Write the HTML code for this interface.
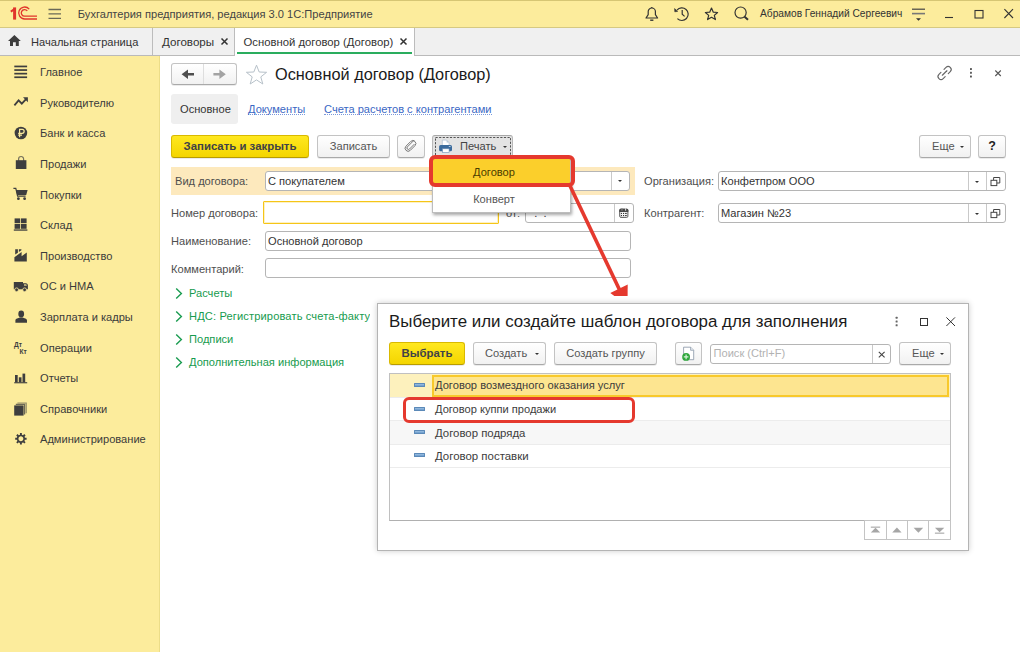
<!DOCTYPE html>
<html lang="ru">
<head>
<meta charset="utf-8">
<title>1C</title>
<style>
*{box-sizing:border-box;margin:0;padding:0}
html,body{width:1024px;height:659px;overflow:hidden;background:#fff}
body{font-family:"Liberation Sans",sans-serif;font-size:11.1px;color:#3b3b3b;position:relative}
.abs{position:absolute}
.t{position:absolute;white-space:nowrap;line-height:14px;color:#4e4e4e}
#hdr{left:0;top:0;width:1020px;height:28px;background:#fcec9c;border-top:1px solid #d6c674;border-bottom:1px solid #d6c982}
#tabs{left:0;top:28px;width:1020px;height:28px;background:#f0f0f0;border-bottom:1px solid #bababa}
#side{left:0;top:56px;width:160px;height:596px;background:#fcec9c;border-right:1px solid #ecdd88}
.si{position:absolute;left:40px;white-space:nowrap;line-height:14px;color:#3b3b3b}
.btn{position:absolute;height:23px;border:1px solid #c3c3c3;border-bottom-color:#a9a9a9;border-radius:3px;background:linear-gradient(#ffffff,#f1f1f1);box-shadow:0 1px 0 rgba(0,0,0,.08);text-align:center;line-height:21px;white-space:nowrap;color:#555}
.ybtn{background:linear-gradient(#ffe81f,#f4d500);border-color:#d9b900;border-bottom-color:#b89c00;font-weight:bold;color:#404247;font-size:11.4px}
.inp{position:absolute;height:20px;border:1px solid #b5b5b5;border-radius:3px;background:#fff;line-height:18px;padding-left:2px;white-space:nowrap;color:#333}
.lnk{color:#3a67c4;border-bottom:1px dotted #7a99dc}
.car{position:absolute;width:0;height:0;border-left:2.3px solid transparent;border-right:2.3px solid transparent;border-top:2.4px solid #333}
.grp{position:absolute;left:189px;color:#169b4e;white-space:nowrap;line-height:14px}
</style>
</head>
<body>
<!-- header -->
<div id="hdr" class="abs"></div>
<div class="t" style="left:77.8px;top:7px;font-size:11.1px;color:#444">Бухгалтерия предприятия, редакция 3.0 1С:Предприятие</div>
<div class="t" style="left:760px;top:7px;font-size:10.2px;color:#333">Абрамов Геннадий Сергеевич</div>
<!-- tabs -->
<div id="tabs" class="abs"></div>
<div class="abs" style="left:152px;top:28px;width:1px;height:27px;background:#bcbcbc"></div>
<div class="abs" style="left:234px;top:28px;width:1px;height:27px;background:#bcbcbc"></div>
<div class="abs" style="left:235px;top:28px;width:179px;height:28px;background:#fff"></div>
<div class="abs" style="left:414px;top:28px;width:1px;height:27px;background:#bcbcbc"></div>
<div class="abs" style="left:237px;top:52px;width:175px;height:2px;background:linear-gradient(#2aad5e,#2aad5e 75%,#9fd9b7)"></div>
<div class="t" style="left:31px;top:35px;color:#333">Начальная страница</div>
<div class="t" style="left:162px;top:35px;color:#333;font-size:11.6px">Договоры</div>
<div class="t" style="left:243.5px;top:35px;color:#333;font-size:11.3px">Основной договор (Договор)</div>
<!-- sidebar -->
<div id="side" class="abs"></div>
<div class="si" style="top:65px">Главное</div>
<div class="si" style="top:96px">Руководителю</div>
<div class="si" style="top:126px">Банк и касса</div>
<div class="si" style="top:157px">Продажи</div>
<div class="si" style="top:188px">Покупки</div>
<div class="si" style="top:218px">Склад</div>
<div class="si" style="top:249px">Производство</div>
<div class="si" style="top:279px">ОС и НМА</div>
<div class="si" style="top:310px">Зарплата и кадры</div>
<div class="si" style="top:341px">Операции</div>
<div class="si" style="top:371px">Отчеты</div>
<div class="si" style="top:402px">Справочники</div>
<div class="si" style="top:432px">Администрирование</div>
<!-- header icons -->
<svg class="abs" style="left:0;top:0" width="1024" height="56" viewBox="0 0 1024 56">
<!-- 1C logo -->
<g fill="none" stroke="#e0342b" stroke-width="1.3">
<path d="M10.8 11.6 L14.5 9.2" stroke-width="2"/>
<path d="M14.6 7.4 V19.6" stroke-width="3"/>
<path d="M29.2 9.1 A6 6 0 1 0 24.6 19 H37"/>
<path d="M27.3 11 A3.3 3.3 0 1 0 24.6 16.2 H37"/>
</g>
<!-- hamburger -->
<g stroke="#6a6957" stroke-width="1.3"><path d="M48.5 9.5 H61 M48.5 13.9 H61 M48.5 18.3 H61"/></g>
<!-- home -->
<path d="M14.4 35 L8 41 H10 V46 H13 V42.3 H15.8 V46 H18.8 V41 H20.8 Z" fill="#3d3d3d"/>
<!-- tab close x -->
<g stroke="#333" stroke-width="1.5"><path d="M221.5 38.5 L227.5 44.5 M227.5 38.5 L221.5 44.5"/><path d="M400.5 38.5 L406.5 44.5 M406.5 38.5 L400.5 44.5"/></g>
<!-- bell -->
<g fill="none" stroke="#333" stroke-width="1.2">
<path d="M646 18 H657.6 L655.4 14.6 V11.6 A3.6 3.6 0 0 0 648.2 11.6 V14.6 Z" stroke-linejoin="round"/>
<path d="M651.8 8 V7" />
<path d="M650.2 20.2 H653.4" stroke-width="1.4"/>
<!-- history -->
<path d="M677 10.2 A6.3 6.3 0 1 1 677.4 18.6"/>
<path d="M682.2 10 V14.2 L684.6 16.4"/>
<path d="M674.6 8.6 L677.6 11.4 L674.8 11.8 Z" fill="#333" stroke-width=".6"/>
<!-- star -->
<path d="M711.5 8 L713.3 12.2 L717.6 12.5 L714.3 15.4 L715.4 19.6 L711.5 17.3 L707.6 19.6 L708.7 15.4 L705.4 12.5 L709.7 12.2 Z" stroke-linejoin="round"/>
<!-- search -->
<circle cx="740.6" cy="12.6" r="5.6"/>
<path d="M744.6 16.8 L748 19.8" stroke-width="2"/>
</g>
<!-- settings lines -->
<g stroke="#444" stroke-width="1.2"><path d="M912 9.2 H925"/><path d="M912 13.6 H925" stroke="#777" stroke-width="1.6"/></g>
<path d="M916 18.2 H921 L918.5 20.8 Z" fill="#333"/>
<!-- window btns -->
<g fill="none" stroke="#333" stroke-width="1.1"><path d="M945 17.5 H953"/><rect x="975" y="10.5" width="8" height="7.5"/><path d="M1004.4 9.2 L1013 18 M1013 9.2 L1004.4 18"/></g>
</svg>
<!-- sidebar icons -->
<svg class="abs" style="left:0;top:56px" width="44" height="400" viewBox="0 56 44 400">
<g fill="#3e3e3e">
<!-- main -->
<rect x="14.3" y="65.6" width="12.8" height="1.7"/><rect x="14.3" y="69.2" width="12.8" height="1.7"/><rect x="14.3" y="72.8" width="12.8" height="1.7"/><rect x="14.3" y="76.4" width="12.8" height="1.7"/>
<!-- trend -->
<path d="M14.4 105.3 L18.6 100.4 L21.8 103.7 L26.3 98.9" fill="none" stroke="#3e3e3e" stroke-width="1.8"/>
<path d="M23 97.2 H27.9 V102.2 Z"/>
<!-- coin -->
<circle cx="20.9" cy="133" r="6.3"/>
<path d="M19.6 137.2 V129.4 H22.2 A1.9 1.9 0 0 1 22.2 133.3 H18.2 M18.2 135.2 H22" fill="none" stroke="#fcec9c" stroke-width="1.2"/>
<!-- bag -->
<path d="M15.8 160.2 H26.4 V169 H15.8 Z"/>
<path d="M18.6 161 V159 A2.5 2.5 0 0 1 23.6 159 V161" fill="none" stroke="#3e3e3e" stroke-width="1.2" opacity=".7"/>
<!-- cart -->
<path d="M13.4 188.4 H15.8 L17.6 196.2 H25.6" fill="none" stroke="#3e3e3e" stroke-width="1.2"/>
<path d="M16 190 H27.6 L26.2 195 H17.2 Z"/>
<circle cx="18.4" cy="198.7" r="1.4"/><circle cx="24.6" cy="198.7" r="1.4"/>
<!-- warehouse -->
<rect x="14.6" y="218.4" width="5.6" height="4.8"/><rect x="21" y="218.4" width="5.6" height="4.8"/>
<rect x="14.6" y="224" width="5.6" height="4.8"/><rect x="21" y="224" width="5.6" height="4.8"/>
<rect x="13.8" y="229.4" width="13.6" height="1.3"/>
<!-- factory -->
<path d="M14.4 261.4 V257.2 L21.6 252 V256.2 L26.8 252.6 V261.4 Z"/>
<path d="M15.2 254.6 V249.2 H17.9 V252.7 Z"/><path d="M18.9 252 V249.2 H21.4 V250.2 Z"/>
<!-- truck -->
<path d="M13.8 282 H23 V289.3 H13.8 Z"/>
<path d="M23 283.3 H26.2 Q27.9 283.6 27.9 285.6 V289.3 H23 Z"/>
<path d="M24 284.2 H26 Q26.8 284.4 26.8 285.8 H24 Z" fill="#fcec9c" opacity=".8"/>
<circle cx="16.6" cy="289.8" r="1.9" stroke="#fcec9c" stroke-width=".8"/><circle cx="24.6" cy="289.8" r="1.9" stroke="#fcec9c" stroke-width=".8"/>
<!-- person -->
<ellipse cx="21.2" cy="314" rx="2.9" ry="3.4"/>
<path d="M15.4 322.7 V320.6 C15.4 318.8 18.6 318 19.6 317.6 H22.8 C23.8 318 27 318.8 27 320.6 V322.7 Z"/>
<!-- bars -->
<rect x="14.2" y="382.2" width="13" height="1.1"/>
<rect x="15" y="375" width="2.7" height="7.4"/><rect x="18.8" y="377.3" width="2.7" height="5"/><rect x="22.5" y="373.6" width="2.7" height="8.8"/>
<!-- books -->
<path d="M17.4 402.4 H26.8 V413.2 H25.6 V403.6 H17.4 Z" opacity=".55"/>
<path d="M15.8 403.8 H25.2 V414.4 H24 V405 H15.8 Z" opacity=".75"/>
<rect x="14.2" y="405.4" width="9.4" height="10.2"/>
<!-- gear -->
<g transform="translate(20.9 438.8)">
<circle r="3.3" fill="none" stroke="#3e3e3e" stroke-width="1.7"/>
<g stroke="#3e3e3e" stroke-width="1.9"><path d="M0 -3.6 V-5.7 M0 3.6 V5.7 M-3.6 0 H-5.7 M3.6 0 H5.7 M2.55 2.55 L4.03 4.03 M-2.55 2.55 L-4.03 4.03 M2.55 -2.55 L4.03 -4.03 M-2.55 -2.55 L-4.03 -4.03"/></g>
</g>
</g>
<text x="14" y="346.6" font-family="Liberation Sans" font-size="6.6" font-weight="bold" fill="#3e3e3e">Дт</text>
<text x="19.4" y="353.8" font-family="Liberation Sans" font-size="6.6" font-weight="bold" fill="#3e3e3e">Кт</text>
</svg>
<!-- content -->
<div id="content">
<!-- nav buttons -->
<div class="btn" style="left:171px;top:63px;width:66px;height:22px"></div>
<div class="abs" style="left:203px;top:64px;width:1px;height:20px;background:#dedede"></div>
<svg class="abs" style="left:171px;top:63px" width="66" height="22" viewBox="171 63 66 22"><path d="M181.6 74.3 L188 69.6 V73.1 H194 V75.5 H188 V79 Z" fill="#4f4f4f"/><path d="M225.8 74.3 L219.4 69.6 V73.1 H213.4 V75.5 H219.4 V79 Z" fill="#a3a3a3"/></svg>
<!-- star -->
<svg class="abs" style="left:245px;top:64px" width="23" height="21" viewBox="0 0 23 21"><path d="M11.5 1.2 L14.2 8 L21.6 8.3 L15.8 12.9 L17.8 20 L11.5 15.9 L5.2 20 L7.2 12.9 L1.4 8.3 L8.8 8 Z" fill="#fff" stroke="#b7c1c9" stroke-width="1"/></svg>
<div class="t" style="left:275px;top:64px;font-size:16.3px;line-height:20px;color:#1a1a1a">Основной договор (Договор)</div>
<svg class="abs" style="left:928px;top:60px" width="84" height="28" viewBox="928 60 84 28">
<g transform="rotate(-45 944.6 73)" fill="none" stroke="#666" stroke-width="1.15" stroke-linecap="round">
<path d="M942.4 70 H939.6 A3 3 0 0 0 939.6 76 H942.4"/>
<path d="M946.8 70 H949.6 A3 3 0 0 1 949.6 76 H946.8"/>
<path d="M941.4 73 H947.8"/>
</g>
<g fill="#555"><rect x="970" y="68.1" width="1.9" height="1.9" rx=".5"/><rect x="970" y="71.8" width="1.9" height="1.9" rx=".5"/><rect x="970" y="75.5" width="1.9" height="1.9" rx=".5"/></g>
<path d="M995.3 70.5 L1000.8 76 M1000.8 70.5 L995.3 76" stroke="#555" stroke-width="1.1" fill="none"/>
</svg>
<!-- sub tabs -->
<div class="abs" style="left:171px;top:94px;width:67px;height:30px;background:#efefef;border-radius:3px"></div>
<div class="t" style="left:180px;top:102px;color:#333">Основное</div>
<div class="t lnk" style="left:248px;top:104px;line-height:10.4px">Документы</div>
<div class="t lnk" style="left:324px;top:104px;line-height:10.4px">Счета расчетов с контрагентами</div>
<!-- toolbar -->
<div class="btn ybtn" style="left:171px;top:135px;width:138px">Записать и закрыть</div>
<div class="btn" style="left:317px;top:135px;width:73px">Записать</div>
<div class="btn" style="left:397px;top:135px;width:28px"></div>
<div class="btn" id="printbtn" style="left:432px;top:135px;width:81px;background:#e3e3e3;border-color:#b9b9b9;border-top-color:#a8a8a8"></div>
<svg class="abs" style="left:434px;top:136px" width="79" height="22" viewBox="0 0 79 22"><rect x="1.5" y="1.5" width="75" height="18.4" fill="none" stroke="#444" stroke-width=".9" stroke-dasharray="2.2 1.4"/></svg>
<div class="t" style="left:460px;top:139px;color:#444">Печать</div>
<div class="car" style="left:502.5px;top:145.5px"></div>
<svg class="abs" style="left:396px;top:132px" width="64" height="28" viewBox="396 132 64 28">
<g transform="rotate(-45 410.4 146)" fill="none" stroke="#6a6a6a" stroke-width=".85"><rect x="404.2" y="143" width="12.6" height="6" rx="3"/><path d="M417.4 144.5 H407.6 A1.5 1.5 0 0 0 407.6 147.5 H414.6"/></g>
<path d="M442.3 140.1 H446.6 L449.1 142.6 V146 H442.3 Z" fill="#fff" stroke="#9fb3c8" stroke-width=".6"/>
<path d="M446.6 140.1 V142.6 H449.1 Z" fill="#b8c8d8"/>
<rect x="439.1" y="144.9" width="12.9" height="6.4" rx="1.6" fill="#3b6b9d"/>
<rect x="442.5" y="148.8" width="6.6" height="3.8" fill="#fff" stroke="#6a8db5" stroke-width=".6"/>
<rect x="448.8" y="146.1" width="1.8" height=".9" fill="#c9d8e8"/>
</svg>
<div class="btn" style="left:919px;top:135px;width:52px;text-align:left;padding-left:12px">Еще</div>
<div class="car" style="left:959.7px;top:145.5px"></div>
<div class="btn" style="left:978px;top:135px;width:28px;font-weight:bold;color:#222;font-size:12.5px">?</div>
<!-- row 1 -->
<div class="abs" style="left:171px;top:167px;width:464px;height:28px;background:#fde9bd"></div>
<div class="t" style="left:175px;top:174px">Вид договора:</div>
<div class="inp" style="left:265px;top:171px;width:365px">С покупателем</div>
<div class="abs" style="left:611px;top:172px;width:1px;height:18px;background:#c9c9c9"></div>
<div class="car" style="left:617.8px;top:180.2px"></div>
<div class="t" style="left:644px;top:174px">Организация:</div>
<div class="inp" style="left:718px;top:171px;width:288px">Конфетпром ООО</div>
<div class="abs" style="left:968px;top:172px;width:1px;height:18px;background:#c9c9c9"></div>
<div class="abs" style="left:986px;top:172px;width:1px;height:18px;background:#c9c9c9"></div>
<div class="car" style="left:974.7px;top:180.5px"></div>
<svg class="abs" style="left:989px;top:176px" width="14" height="14" viewBox="0 0 14 14"><g fill="none" stroke="#444" stroke-width="1"><path d="M4.6 4.2 V1.5 H10.8 V7 H8"/><rect x="2" y="4.3" width="5.8" height="5.3" fill="#fff"/></g></svg>
<!-- row 2 -->
<div class="t" style="left:171px;top:206px">Номер договора:</div>
<div class="inp" style="left:263px;top:201px;width:236px;height:23px;border:1px solid #f5c518;box-shadow:inset 0 0 0 1px #fdf1c4;border-radius:1px"></div>
<div class="t" style="left:506px;top:206px">от:</div>
<div class="inp" style="left:525px;top:203px;width:109px">&nbsp;&nbsp;.&nbsp;&nbsp;.</div>
<div class="abs" style="left:614px;top:204px;width:1px;height:18px;background:#c9c9c9"></div>
<div class="t" style="left:644px;top:206px">Контрагент:</div>
<div class="inp" style="left:718px;top:203px;width:288px">Магазин №23</div>
<div class="abs" style="left:968px;top:204px;width:1px;height:18px;background:#c9c9c9"></div>
<div class="abs" style="left:986px;top:204px;width:1px;height:18px;background:#c9c9c9"></div>
<div class="car" style="left:974.7px;top:212.5px"></div>
<svg class="abs" style="left:989px;top:208px" width="14" height="14" viewBox="0 0 14 14"><g fill="none" stroke="#444" stroke-width="1"><path d="M4.6 4.2 V1.5 H10.8 V7 H8"/><rect x="2" y="4.3" width="5.8" height="5.3" fill="#fff"/></g></svg>
<svg class="abs" style="left:616px;top:205px" width="16" height="16" viewBox="616 205 16 16">
<rect x="619.7" y="209.2" width="8.2" height="8.2" rx="1.2" fill="#f4f4f4" stroke="#4a4a4a" stroke-width=".9"/>
<path d="M619.3 212 V210.2 Q619.3 208.8 620.7 208.8 H626.9 Q628.3 208.8 628.3 210.2 V212 Z" fill="#484848"/>
<rect x="621.4" y="208.1" width="1.1" height="2.6" fill="#8a8a8a"/><rect x="625" y="208.1" width="1.1" height="2.6" fill="#d0d0d0"/>
<g fill="#333"><rect x="620.9" y="212.9" width="1.1" height="1.1"/><rect x="623" y="212.9" width="1.1" height="1.1"/><rect x="625.1" y="212.9" width="1.6" height="1.1"/>
<rect x="620.9" y="215" width="1.1" height="1.1"/><rect x="623" y="215" width="1.1" height="1.1"/><rect x="625.1" y="215" width="1.6" height="1.1"/></g>
</svg>
<!-- row 3 -->
<div class="t" style="left:171px;top:234px">Наименование:</div>
<div class="inp" style="left:265px;top:231px;width:366px">Основной договор</div>
<!-- row 4 -->
<div class="t" style="left:171px;top:262px">Комментарий:</div>
<div class="inp" style="left:265px;top:258px;width:366px"></div>
<!-- groups -->
<svg class="abs" style="left:174px;top:287px" width="10" height="13" viewBox="0 0 10 13"><path d="M2.2 1.4 L7.4 6.5 L2.2 11.6" fill="none" stroke="#1a9c50" stroke-width="1.4"/></svg>
<svg class="abs" style="left:174px;top:310px" width="10" height="13" viewBox="0 0 10 13"><path d="M2.2 1.4 L7.4 6.5 L2.2 11.6" fill="none" stroke="#1a9c50" stroke-width="1.4"/></svg>
<svg class="abs" style="left:174px;top:333px" width="10" height="13" viewBox="0 0 10 13"><path d="M2.2 1.4 L7.4 6.5 L2.2 11.6" fill="none" stroke="#1a9c50" stroke-width="1.4"/></svg>
<svg class="abs" style="left:174px;top:356px" width="10" height="13" viewBox="0 0 10 13"><path d="M2.2 1.4 L7.4 6.5 L2.2 11.6" fill="none" stroke="#1a9c50" stroke-width="1.4"/></svg>

<div class="grp" style="top:286px">Расчеты</div>
<div class="grp" style="top:309px;letter-spacing:.14px">НДС: Регистрировать счета-фактуры</div>
<div class="grp" style="top:332px">Подписи</div>
<div class="grp" style="top:355px">Дополнительная информация</div>
</div>
<!-- popup menu -->
<div class="abs" style="left:432px;top:157px;width:139px;height:56px;background:#fff;border:1px solid #bdbdbd;box-shadow:1px 2px 3px rgba(0,0,0,.35)"></div>
<div class="abs" style="left:433px;top:158px;width:137px;height:27px;background:#fbcf2b"></div>
<div class="t" style="left:433px;top:165px;width:122px;text-align:center;color:#4a3c00">Договор</div>
<div class="t" style="left:433px;top:191.5px;width:122px;text-align:center;color:#555">Конверт</div>
<div class="abs" style="left:429px;top:154.5px;width:146px;height:32px;border:4px solid #e5392e;border-radius:6px"></div>
<!-- arrow -->
<svg class="abs" style="left:560px;top:180px" width="80" height="115.6" viewBox="560 180 80 115.6"><path d="M569.6 185 L619.4 289.6" stroke="#e5392e" stroke-width="3.6" fill="none"/><path d="M610.3 292.9 L627.7 284.5 L627.5 306.2 Z" fill="#e5392e"/></svg>
<!-- dialog -->
<div id="dialog">
<div class="abs" style="left:370px;top:296px;width:606px;height:262px;background:#fff"></div>
<div class="abs" style="left:377px;top:303px;width:592px;height:248px;background:#fff;border:1px solid #b4b4b4;box-shadow:0 0 6px rgba(0,0,0,.2)"></div>
<div class="t" style="left:389px;top:312px;font-size:16.9px;line-height:20px;color:#1a1a1a">Выберите или создайте шаблон договора для заполнения</div>
<div class="btn ybtn" style="left:389px;top:342px;width:76px">Выбрать</div>
<div class="btn" style="left:473px;top:342px;width:73px;text-align:left;padding-left:11px">Создать</div>
<div class="car" style="left:534.7px;top:352.5px"></div>
<div class="btn" style="left:554px;top:342px;width:103px">Создать группу</div>
<div class="btn" style="left:675px;top:342px;width:27px"></div>
<div class="inp" style="left:710px;top:344px;width:181px;color:#b2b2b2;padding-left:2.5px;line-height:17px">Поиск (Ctrl+F)</div>
<svg class="abs" style="left:680px;top:345px" width="18" height="18" viewBox="680 345 18 18"><path d="M683.6 347.2 H690.6 L693.7 350.3 V359.7 H683.6 Z" fill="#fff" stroke="#8593a5" stroke-width=".8"/><path d="M690.6 347.2 V350.3 H693.7" fill="#e6ebf0" stroke="#8593a5" stroke-width=".7"/><circle cx="686.1" cy="356.9" r="3.9" fill="#2fa63c"/><path d="M686.1 354.6 V359.2 M683.8 356.9 H688.4" stroke="#d8f3da" stroke-width="1.2"/></svg>
<div class="abs" style="left:872px;top:345px;width:1px;height:18px;background:#c9c9c9"></div>
<div class="btn" style="left:899px;top:342px;width:52px;text-align:left;padding-left:12px">Еще</div>
<div class="car" style="left:939.7px;top:352.5px"></div>
<svg class="abs" style="left:870px;top:310px" width="96" height="54" viewBox="870 310 96 54">
<g fill="#666"><rect x="895.6" y="316.8" width="2" height="2" rx=".5"/><rect x="895.6" y="320.6" width="2" height="2" rx=".5"/><rect x="895.6" y="324.3" width="2" height="2" rx=".5"/></g>
<g fill="none" stroke="#333" stroke-width="1"><rect x="920.5" y="318.5" width="7" height="7"/><path d="M946.4 317.4 L955 326 M955 317.4 L946.4 326"/></g>
<path d="M878.8 351.8 L884.6 357.4 M884.6 351.8 L878.8 357.4" stroke="#444" stroke-width="1.1" fill="none"/>
</svg>
<!-- table -->
<div class="abs" style="left:389px;top:373px;width:562px;height:148px;border:1px solid #c0c0c0;border-bottom-color:#b0b0b0;background:#fff"></div>
<div class="abs" style="left:390px;top:374px;width:560px;height:23px;background:#fdf1bd"></div>
<div class="abs" style="left:432px;top:375px;width:517px;height:22px;background:#fde590;border:2px solid #f8c92b"></div>
<div class="abs" style="left:390px;top:397px;width:560px;height:1px;background:#ececec"></div>
<div class="abs" style="left:390px;top:421px;width:560px;height:23px;background:#f7f7f7"></div>
<div class="abs" style="left:390px;top:420px;width:560px;height:1px;background:#ececec"></div>
<div class="abs" style="left:390px;top:444px;width:560px;height:1px;background:#ececec"></div>
<div class="abs" style="left:390px;top:467px;width:560px;height:1px;background:#ececec"></div>
<div class="t" style="left:435px;top:378px;color:#3c3c3c;font-size:11.15px">Договор возмездного оказания услуг</div>
<div class="t" style="left:435px;top:402px;color:#3c3c3c">Договор куппи продажи</div>
<div class="t" style="left:435px;top:426px;color:#3c3c3c;font-size:11.4px">Договор подряда</div>
<div class="t" style="left:435px;top:449px;color:#3c3c3c;font-size:11.45px">Договор поставки</div>
<div class="abs" style="left:403px;top:396.7px;width:232px;height:26.5px;border:3.5px solid #e5392e;border-radius:6px"></div>
<div class="abs" style="left:414px;top:383.4px;width:11px;height:4px;background:linear-gradient(#9cc0e2,#6a9acb);border:1px solid #5b89b8;border-radius:.5px"></div>
<div class="abs" style="left:414px;top:406.8px;width:11px;height:4px;background:linear-gradient(#9cc0e2,#6a9acb);border:1px solid #5b89b8;border-radius:.5px"></div>
<div class="abs" style="left:414px;top:430.2px;width:11px;height:4px;background:linear-gradient(#9cc0e2,#6a9acb);border:1px solid #5b89b8;border-radius:.5px"></div>
<div class="abs" style="left:414px;top:453.4px;width:11px;height:4px;background:linear-gradient(#9cc0e2,#6a9acb);border:1px solid #5b89b8;border-radius:.5px"></div>
<!-- scroll btns -->
<div class="abs" style="left:864px;top:520px;width:87px;height:20px;border:1px solid #c4c4c4;background:#fff"></div>
<div class="abs" style="left:886px;top:521px;width:1px;height:18px;background:#c4c4c4"></div>
<div class="abs" style="left:907px;top:521px;width:1px;height:18px;background:#c4c4c4"></div>
<div class="abs" style="left:928px;top:521px;width:1px;height:18px;background:#c4c4c4"></div>
<svg class="abs" style="left:864px;top:521px" width="88" height="20" viewBox="864 521 88 20"><g fill="#a6a6a6">
<path d="M870.8 532.6 L875.5 527.8 L880.2 532.6 Z"/><rect x="870.8" y="526.6" width="9.4" height="1.1"/>
<path d="M892.2 532.6 L896.9 527.6 L901.6 532.6 Z"/>
<path d="M913.6 527.8 L923.2 527.8 L918.4 532.7 Z"/>
<path d="M934.9 527.8 L944.3 527.8 L939.6 532.2 Z"/><rect x="934.9" y="532.6" width="9.4" height="1.1"/>
</g></svg>
</div>
</body>
</html>
